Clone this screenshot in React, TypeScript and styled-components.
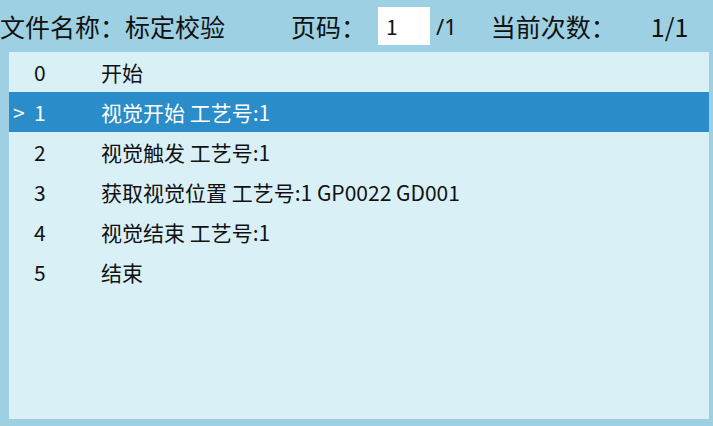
import React from 'react';
import styled, { createGlobalStyle } from 'styled-components';

const GlobalStyle = createGlobalStyle`
  html, body {
    margin: 0;
    padding: 0;
    background: #9dd0e3;
  }
  body {
    font-family: "Noto Sans CJK SC", "Noto Sans", sans-serif;
    color: #111;
  }
`;

const Page = styled.div`
  width: 713px;
  height: 426px;
  background: #9dd0e3;
  display: flex;
  flex-direction: column;
  box-sizing: border-box;
  padding: 0 4px 7px 9px;
`;

const Header = styled.div`
  height: 52px;
  display: flex;
  align-items: center;
  margin-left: -9px;
  font-size: 25px;
  line-height: 1;
`;

const Label = styled.span<{ $gap?: number }>`
  margin-left: ${(p) => p.$gap ?? 0}px;
  white-space: nowrap;
`;

const PageBox = styled.div`
  width: 52px;
  height: 38px;
  background: #fff;
  margin-left: 12px;
  display: flex;
  align-items: center;
  padding-left: 8px;
  box-sizing: border-box;
  font-size: 21px;
`;

const Small = styled.span<{ $gap?: number }>`
  margin-left: ${(p) => p.$gap ?? 0}px;
  font-family: "Noto Sans", sans-serif;
  font-size: 22px;
`;

const Panel = styled.div`
  flex: 1;
  background: #d9f0f7;
`;

const Row = styled.div<{ $active?: boolean }>`
  height: 40px;
  display: flex;
  align-items: center;
  font-size: 21px;
  background: ${(p) => (p.$active ? '#2a8cc8' : 'transparent')};
  color: ${(p) => (p.$active ? '#fff' : '#111')};
`;

const Marker = styled.span`
  width: 25px;
  padding-left: 4px;
  box-sizing: border-box;
`;

const Num = styled.span`
  width: 67px;
`;

const steps = [
  '开始',
  '视觉开始 工艺号:1',
  '视觉触发 工艺号:1',
  '获取视觉位置 工艺号:1 GP0022 GD001',
  '视觉结束 工艺号:1',
  '结束',
];

const App: React.FC = () => {
  const current = 1;
  return (
    <>
      <GlobalStyle />
      <Page>
        <Header>
          <Label>文件名称：</Label>
          <Label>标定校验</Label>
          <Label $gap={66}>页码：</Label>
          <PageBox>1</PageBox>
          <Small $gap={6}>/1</Small>
          <Label $gap={34}>当前次数：</Label>
          <Label $gap={35}>1/1</Label>
        </Header>
        <Panel>
          {steps.map((s, i) => (
            <Row key={i} $active={i === current}>
              <Marker>{i === current ? '>' : ''}</Marker>
              <Num>{i}</Num>
              <span>{s}</span>
            </Row>
          ))}
        </Panel>
      </Page>
    </>
  );
};

export default App;
